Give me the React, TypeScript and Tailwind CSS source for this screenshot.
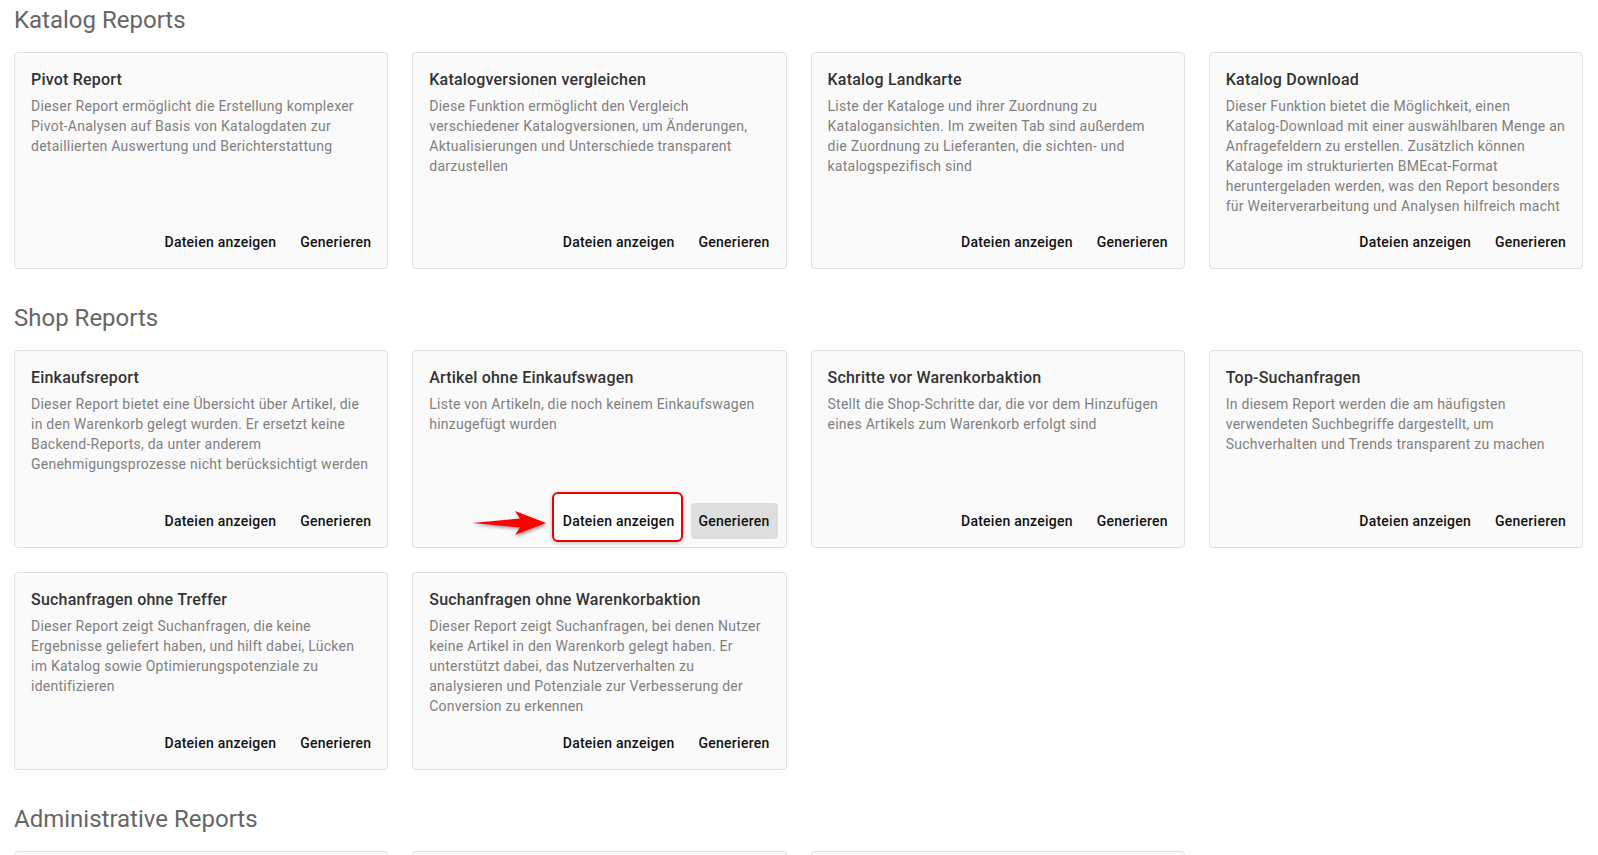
import type { ReactNode } from 'react';

type Report = {
  title: string;
  description: string;
  highlight?: boolean;
};

const katalogReports: Report[] = [
  {
    title: 'Pivot Report',
    description:
      'Dieser Report ermöglicht die Erstellung komplexer Pivot-Analysen auf Basis von Katalogdaten zur detaillierten Auswertung und Berichterstattung',
  },
  {
    title: 'Katalogversionen vergleichen',
    description:
      'Diese Funktion ermöglicht den Vergleich verschiedener Katalogversionen, um Änderungen, Aktualisierungen und Unterschiede transparent darzustellen',
  },
  {
    title: 'Katalog Landkarte',
    description:
      'Liste der Kataloge und ihrer Zuordnung zu Katalogansichten. Im zweiten Tab sind außerdem die Zuordnung zu Lieferanten, die sichten- und katalogspezifisch sind',
  },
  {
    title: 'Katalog Download',
    description:
      'Dieser Funktion bietet die Möglichkeit, einen Katalog-Download mit einer auswählbaren Menge an Anfragefeldern zu erstellen. Zusätzlich können Kataloge im strukturierten BMEcat-Format heruntergeladen werden, was den Report besonders für Weiterverarbeitung und Analysen hilfreich macht',
  },
];

const shopReports: Report[] = [
  {
    title: 'Einkaufsreport',
    description:
      'Dieser Report bietet eine Übersicht über Artikel, die in den Warenkorb gelegt wurden. Er ersetzt keine Backend-Reports, da unter anderem Genehmigungsprozesse nicht berücksichtigt werden',
  },
  {
    title: 'Artikel ohne Einkaufswagen',
    description: 'Liste von Artikeln, die noch keinem Einkaufswagen hinzugefügt wurden',
    highlight: true,
  },
  {
    title: 'Schritte vor Warenkorbaktion',
    description:
      'Stellt die Shop-Schritte dar, die vor dem Hinzufügen eines Artikels zum Warenkorb erfolgt sind',
  },
  {
    title: 'Top-Suchanfragen',
    description:
      'In diesem Report werden die am häufigsten verwendeten Suchbegriffe dargestellt, um Suchverhalten und Trends transparent zu machen',
  },
  {
    title: 'Suchanfragen ohne Treffer',
    description:
      'Dieser Report zeigt Suchanfragen, die keine Ergebnisse geliefert haben, und hilft dabei, Lücken im Katalog sowie Optimierungspotenziale zu identifizieren',
  },
  {
    title: 'Suchanfragen ohne Warenkorbaktion',
    description:
      'Dieser Report zeigt Suchanfragen, bei denen Nutzer keine Artikel in den Warenkorb gelegt haben. Er unterstützt dabei, das Nutzerverhalten zu analysieren und Potenziale zur Verbesserung der Conversion zu erkennen',
  },
];

// only the top edge of these is on screen
const adminReports: Report[] = [
  { title: '', description: '' },
  { title: '', description: '' },
  { title: '', description: '' },
];

function Section({ title, children }: { title: string; children: ReactNode }) {
  return (
    <section className="mb-[29px]">
      <h2 className="pt-[4px] mb-4 text-[24px] leading-[32px] font-normal text-[#666666]">{title}</h2>
      <div className="grid grid-cols-4 gap-6">{children}</div>
    </section>
  );
}

function RedArrow() {
  return (
    <svg
      className="absolute left-[-86px] top-[3px] w-[82px] h-[34px] pointer-events-none"
      viewBox="0 0 82 34"
      style={{ filter: 'drop-shadow(1px 2px 1.5px rgba(0,0,0,0.35))' }}
    >
      <polygon points="3,17 51,12.5 46,5 77,17 46,29 51,21.5" fill="#ff0000" />
    </svg>
  );
}

function ReportCard({ report }: { report: Report }) {
  return (
    <div className="flex flex-col min-h-[198px] rounded bg-[#fafafa] border border-[#e0e0e0]">
      <div className="flex-1 px-4 pt-[15px]">
        <h3 className="text-[16px] leading-6 font-medium tracking-[0.2px] text-[#333333]">{report.title}</h3>
        <p className="mt-1 text-[14px] leading-5 tracking-[0.245px] text-[#808080]">{report.description}</p>
      </div>
      {report.title && (
        <div className="flex justify-end gap-2 p-2">
          <div className="relative">
            {report.highlight && (
              <>
                <div className="absolute left-[-3px] right-0 top-[-11px] bottom-[-3px] rounded-md border-2 border-[#ee0000] bg-white shadow-[0_1px_4px_rgba(0,0,0,0.25)]" />
                <RedArrow />
              </>
            )}
            <button className="relative h-9 px-2 rounded text-[14px] font-medium tracking-[0.25px] text-[#111111]">
              Dateien anzeigen
            </button>
          </div>
          <button
            className={`h-9 px-2 rounded text-[14px] font-medium tracking-[0.25px] text-[#111111] ${
              report.highlight ? 'bg-[#dedede]' : ''
            }`}
          >
            Generieren
          </button>
        </div>
      )}
    </div>
  );
}

export default function App() {
  return (
    <div className="min-h-screen bg-white pl-[14px] pr-[15px] font-['Roboto',sans-serif]">
      <Section title="Katalog Reports">
        {katalogReports.map((r) => (
          <ReportCard key={r.title} report={r} />
        ))}
      </Section>
      <Section title="Shop Reports">
        {shopReports.map((r) => (
          <ReportCard key={r.title} report={r} />
        ))}
      </Section>
      <Section title="Administrative Reports">
        {adminReports.map((r, i) => (
          <ReportCard key={i} report={r} />
        ))}
      </Section>
    </div>
  );
}
